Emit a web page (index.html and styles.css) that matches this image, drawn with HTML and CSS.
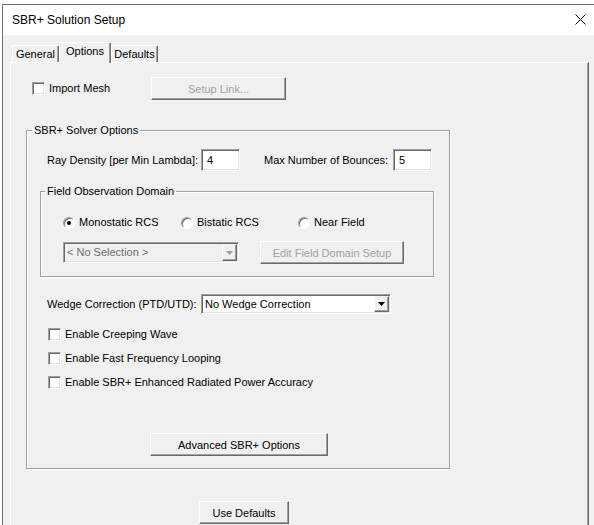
FILE: index.html
```html
<!DOCTYPE html>
<html lang="en">
<head>
    <meta charset="UTF-8">
    <title>SBR+ Solution Setup</title>
    <link rel="stylesheet" href="styles.css">
</head>
<body>
    <div class="window">
        <div class="titlebar">
            <span class="title">SBR+ Solution Setup</span>
            <svg class="close" width="11" height="11" viewBox="0 0 11 11"><path d="M0.5 0.5L10.5 10.5M10.5 0.5L0.5 10.5" stroke="#000" stroke-width="1" fill="none"/></svg>
        </div>
        <div class="client">
            <div class="tabs">
                <span class="tab">General</span>
                <span class="tab active">Options</span>
                <span class="tab defaults">Defaults</span>
            </div>
            <div class="panel">
                <div class="import-row">
                    <label class="check import"><span class="box"></span>Import Mesh</label>
                    <button class="btn setup-link" disabled>Setup Link...</button>
                </div>

                <fieldset class="group solver">
                    <legend>SBR+ Solver Options</legend>
                    <div class="solver-body">
                        <div class="field-row">
                            <span class="field-label">Ray Density [per Min Lambda]:</span>
                            <input class="num" type="text" value="4">
                            <span class="field-label bounces">Max Number of Bounces:</span>
                            <input class="num" type="text" value="5">
                        </div>

                        <fieldset class="group domain">
                            <legend>Field Observation Domain</legend>
                            <div class="domain-body">
                                <div class="radio-row">
                                    <label class="radio-item mono"><span class="radio checked"></span>Monostatic RCS</label>
                                    <label class="radio-item bi"><span class="radio"></span>Bistatic RCS</label>
                                    <label class="radio-item"><span class="radio"></span>Near Field</label>
                                </div>
                                <div class="combo-row">
                                    <div class="combo disabled">
                                        <span class="combo-text">&lt; No Selection &gt;</span>
                                        <span class="combo-btn"><svg width="7" height="4" viewBox="0 0 7 4"><path d="M0 0H7L3.5 4Z" fill="#a0a0a0"/></svg></span>
                                    </div>
                                    <button class="btn edit-domain" disabled>Edit Field Domain Setup</button>
                                </div>
                            </div>
                        </fieldset>

                        <div class="wedge-row">
                            <span class="field-label">Wedge Correction (PTD/UTD):</span>
                            <div class="combo wedge">
                                <span class="combo-text">No Wedge Correction</span>
                                <span class="combo-btn"><svg width="7" height="4" viewBox="0 0 7 4"><path d="M0 0H7L3.5 4Z" fill="#000"/></svg></span>
                            </div>
                        </div>

                        <div class="options">
                            <label class="check"><span class="box"></span>Enable Creeping Wave</label>
                            <label class="check"><span class="box"></span>Enable Fast Frequency Looping</label>
                            <label class="check"><span class="box"></span>Enable SBR+ Enhanced Radiated Power Accuracy</label>
                        </div>

                        <button class="btn advanced">Advanced SBR+ Options</button>
                    </div>
                </fieldset>

                <button class="btn defaults-btn">Use Defaults</button>
            </div>
        </div>
    </div>
</body>
</html>
```

FILE: styles.css
```css
body {
    margin: 0;
    background: #fff;
    overflow: hidden;
    font-family: "Liberation Sans", Arial, sans-serif;
    font-size: 11px;
    color: #000;
}
.window {
    margin: 4px 0 0 2px;
    width: 592px;
    height: 540px;
    box-sizing: border-box;
    border-top: 1px solid #707070;
    border-left: 1px solid #707070;
    display: flex;
    flex-direction: column;
}
.titlebar {
    box-sizing: border-box;
    height: 30px;
    background: #fff;
    display: flex;
    align-items: center;
    justify-content: space-between;
    padding: 0 8px 1px 9px;
    flex-shrink: 0;
}
.title {
    font-size: 12px;
}
.close {
    display: block;
}
.client {
    flex: 1;
    background: #f0f0f0;
    padding-top: 7px;
}
.tabs {
    display: flex;
    align-items: flex-end;
    height: 20px;
    padding-left: 9px;
}
.tab {
    box-sizing: border-box;
    width: 47px;
    height: 17px;
    padding-top: 2px;
    line-height: 13px;
    text-align: center;
    border-top: 1px solid #fff;
    border-left: 1px solid #fff;
    border-right: 1px solid #696969;
    border-radius: 2px 2px 0 0;
    box-shadow: inset -1px 0 0 #a0a0a0;
}
.tab.active {
    width: 52px;
    height: 21px;
    margin-bottom: -1px;
    background: #f0f0f0;
    position: relative;
    z-index: 1;
}
.panel {
    margin-left: 7px;
    width: 579px;
    height: 480px;
    box-sizing: border-box;
    border-top: 1px solid #fff;
    border-left: 1px solid #fff;
    border-right: 1px solid #696969;
    box-shadow: inset -1px 0 0 #a0a0a0;
    padding-top: 14px;
}
.import-row {
    display: flex;
    align-items: center;
    height: 23px;
}
.check {
    display: flex;
    align-items: center;
    gap: 4px;
    height: 13px;
    line-height: 13px;
}
.check.import {
    margin-left: 21px;
    width: 119px;
}
.box {
    box-sizing: border-box;
    width: 13px;
    height: 13px;
    background: #fff;
    border: 1px solid;
    border-color: #a0a0a0 #fff #fff #a0a0a0;
    box-shadow: inset 1px 1px 0 #696969, inset -1px -1px 0 #e3e3e3;
    flex-shrink: 0;
}
.btn {
    box-sizing: border-box;
    height: 23px;
    padding: 0;
    font-family: inherit;
    font-size: 11px;
    color: #000;
    background: #f0f0f0;
    border: 1px solid;
    border-color: #fff #696969 #696969 #fff;
    box-shadow: inset -1px -1px 0 #a0a0a0;
}
.btn:disabled {
    color: #a0a0a0;
}
.setup-link {
    width: 135px;
}
.group {
    margin: 0;
    padding: 0;
    border: 1px solid #a0a0a0;
    box-shadow: 1px 1px 0 #fff, inset 1px 1px 0 #fff;
    box-sizing: border-box;
}
.group legend {
    padding: 0 2px;
    line-height: 13px;
    background: #f0f0f0;
}
.solver {
    margin: 24px 0 0 15px;
    width: 424px;
}
.solver legend {
    margin-left: 5px;
}
.solver-body {
    padding: 12px 0 12px 20px;
}
.field-row {
    display: flex;
    align-items: center;
    height: 22px;
}
.field-label {
    width: 154px;
    flex-shrink: 0;
}
.field-label.bounces {
    width: 129px;
    margin-left: 24px;
}
.num {
    box-sizing: border-box;
    width: 39px;
    height: 22px;
    margin: 0;
    padding: 0 0 1px 5px;
    font-family: inherit;
    font-size: 11px;
    color: #000;
    background: #fff;
    border: 1px solid;
    border-color: #a0a0a0 #fff #fff #a0a0a0;
    box-shadow: inset 1px 1px 0 #696969, inset -1px -1px 0 #e3e3e3;
    outline: none;
}
.domain {
    margin: 14px 0 0 -7px;
    width: 394px;
}
.domain legend {
    margin-left: 4px;
}
.domain-body {
    padding: 18px 0 12px 22px;
}
.radio-row {
    display: flex;
    height: 13px;
    line-height: 13px;
}
.radio-item {
    display: flex;
    align-items: center;
    gap: 4px;
}
.radio-item.mono {
    width: 118px;
}
.radio-item.bi {
    width: 117px;
}
.radio {
    box-sizing: border-box;
    width: 12px;
    height: 12px;
    border-radius: 50%;
    background: #fff;
    border: 1px solid;
    border-color: #a0a0a0 #fff #fff #a0a0a0;
    box-shadow: inset 1px 1px 0 #696969;
    display: flex;
    align-items: center;
    justify-content: center;
}
.radio.checked::after {
    content: "";
    width: 4px;
    height: 4px;
    border-radius: 50%;
    background: #000;
}
.combo-row {
    display: flex;
    align-items: center;
    height: 23px;
    margin-top: 12px;
}
.combo {
    box-sizing: border-box;
    display: flex;
    align-items: center;
    height: 20px;
    padding: 1px 1px 1px 2px;
    background: #fff;
    border: 1px solid;
    border-color: #a0a0a0 #fff #fff #a0a0a0;
    box-shadow: inset 1px 1px 0 #696969, inset -1px -1px 0 #e3e3e3;
}
.combo.disabled {
    width: 176px;
    height: 21px;
    background: #f0f0f0;
    color: #6d6d6d;
}
.combo-text {
    flex: 1;
    padding-left: 1px;
    line-height: 13px;
}
.combo-btn {
    box-sizing: border-box;
    width: 15px;
    height: 16px;
    display: flex;
    align-items: center;
    justify-content: center;
    background: #f0f0f0;
    border: 1px solid;
    border-color: #f0f0f0 #696969 #696969 #fff;
    box-shadow: inset -1px -1px 0 #a0a0a0;
}
.combo.disabled .combo-btn {
    height: 17px;
}
.edit-domain {
    width: 144px;
    margin-left: 21px;
}
.wedge-row {
    display: flex;
    align-items: center;
    height: 20px;
    margin-top: 17px;
}
.combo.wedge {
    width: 190px;
}
.options {
    display: flex;
    flex-direction: column;
    gap: 11px;
    margin: 14px 0 0 1px;
}
.advanced {
    display: block;
    width: 178px;
    margin: 44px 0 0 103px;
}
.defaults-btn {
    display: block;
    width: 90px;
    margin: 32px 0 0 188px;
}
```
